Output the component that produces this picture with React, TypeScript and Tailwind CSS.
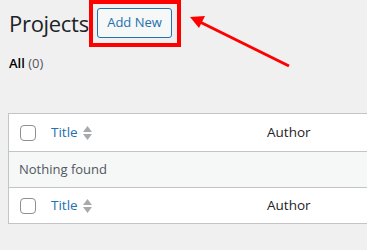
import React from 'react';

const SortArrows = () => (
  <svg width="9" height="14" viewBox="0 0 9 14" className="ml-[5px]">
    <path d="M4.5 0 L9 6 H0 Z" fill="#a7aaad" />
    <path d="M4.5 14 L9 8 H0 Z" fill="#a7aaad" />
  </svg>
);

const HeadRow = ({ bottom }: { bottom?: boolean }) => (
  <div
    className={`flex items-center bg-white ${bottom ? 'h-[35px]' : 'h-[38px] border-b border-[#c3c4c7]'}`}
  >
    <div className="ml-[11px] h-[16px] w-[16px] rounded-[4px] border border-[#8c8f94] bg-white" />
    <div className="ml-[15px] flex w-[216px] items-center">
      <span className="text-[13.5px] text-[#2271b1]">Title</span>
      <SortArrows />
    </div>
    <span className="text-[13.5px] text-[#1d2327]">Author</span>
  </div>
);

export default function App() {
  return (
    <div
      className="relative h-[250px] w-[367px] overflow-hidden bg-[#f0f0f1]"
      style={{ fontFamily: '"Open Sans", "Noto Sans", sans-serif' }}
    >
      <div className="flex items-center pl-[9px] pt-[8px]">
        <h1 className="w-[78px] whitespace-nowrap text-[22px] font-normal leading-[29px] tracking-[-0.3px] text-[#1d2327]">
          Projects
        </h1>
        <button className="ml-[10px] h-[30px] w-[75px] rounded-[3px] border border-[#2271b1] bg-[#f6f7f7] text-[13px] text-[#2271b1]">
          Add New
        </button>
      </div>

      <div className="h-[20px] pl-[9px] pt-[15px] text-[13px] leading-[20px] box-content">
        <span className="font-semibold text-black">All</span>{' '}
        <span className="text-[#50575e]">(0)</span>
      </div>

      <div className="ml-[8px] mt-[40px] w-[400px] border border-[#c3c4c7]">
        <HeadRow />
        <div className="flex h-[36px] items-center border-b border-[#c3c4c7] bg-[#f6f7f7] pl-[10px] text-[13px] text-[#50575e]">
          Nothing found
        </div>
        <HeadRow bottom />
      </div>

      {/* annotation: red box + arrow */}
      <div className="absolute left-[89px] top-[0px] h-[47px] w-[92px] border-[4px] border-[#ff0000]" />
      <svg className="absolute left-0 top-0" width="367" height="250">
        <line x1="289" y1="66" x2="200" y2="22" stroke="#ff0000" strokeWidth="3" />
        <path d="M190 17 L205 16 L199 28 Z" fill="#ff0000" />
      </svg>
    </div>
  );
}
